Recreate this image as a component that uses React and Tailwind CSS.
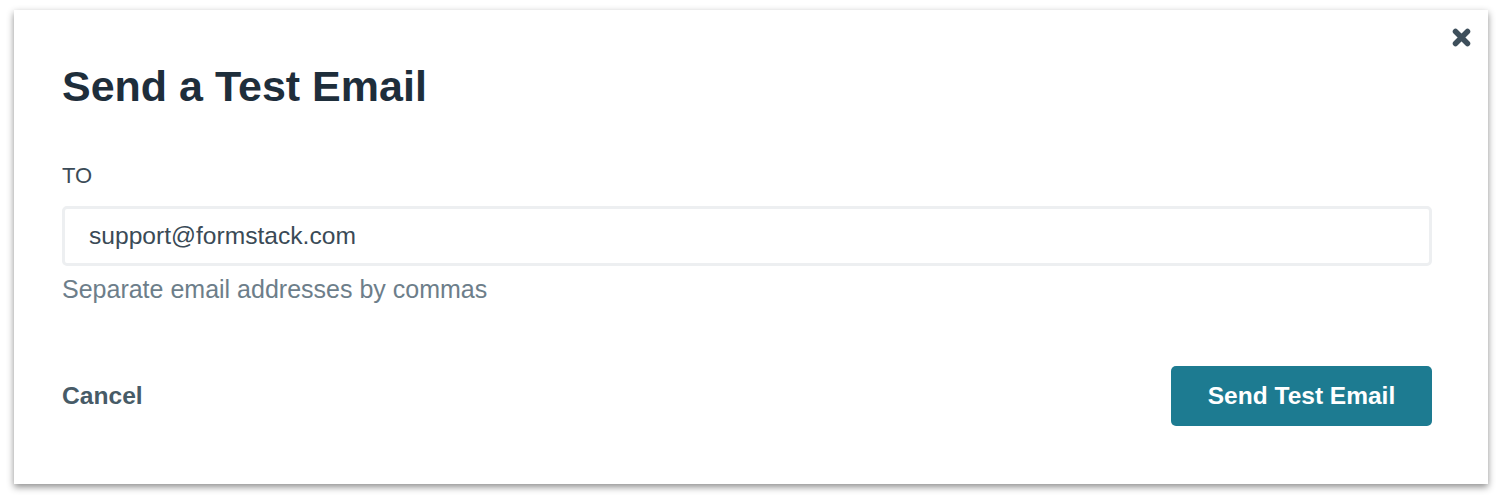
import React, { useState } from 'react';

const CloseIcon = () => (
  <svg width="19" height="19" viewBox="0 0 19 19" fill="none">
    <path d="M3.5 3.5 L15.5 15.5 M15.5 3.5 L3.5 15.5" stroke="currentColor" strokeWidth="5.5" strokeLinecap="round" />
  </svg>
);

const SendTestEmailModal = () => {
  const [to, setTo] = useState('support@formstack.com');

  return (
    <div className="w-[1502px] h-[502px] bg-white pt-[10px] pl-[14px] font-['Liberation_Sans',Arial,sans-serif]">
      <div className="relative w-[1474px] h-[474px] bg-white shadow-[0_3px_7px_rgba(0,0,0,0.45)] pt-[55px] pl-[48px] pr-[56px]">
        <button className="absolute top-[18px] right-[17px] text-[#3e4f5b]">
          <CloseIcon />
        </button>

        <h1 className="text-[43px] leading-none font-bold text-[#1e2e3b]">Send a Test Email</h1>

        {/* Recipient field */}
        <label className="block mt-[57px] text-[22px] leading-none text-[#3b4b57]">TO</label>
        <input
          value={to}
          onChange={(e) => setTo(e.target.value)}
          className="mt-[19px] block w-full h-[60px] border-[3px] border-[#edeff1] rounded-[5px] pl-[24px] text-[24.6px] text-[#3a4a56] outline-none"
        />
        <p className="mt-[11px] text-[25px] leading-none text-[#6d7e8a]">Separate email addresses by commas</p>

        {/* Actions */}
        <div className="mt-[64px] flex items-center justify-between">
          <button className="text-[24.6px] font-bold text-[#475b67]">Cancel</button>
          <button className="w-[261px] h-[60px] rounded-[5px] bg-[#1d7b91] text-white text-[24.5px] font-bold">
            Send Test Email
          </button>
        </div>
      </div>
    </div>
  );
};

export default SendTestEmailModal;
